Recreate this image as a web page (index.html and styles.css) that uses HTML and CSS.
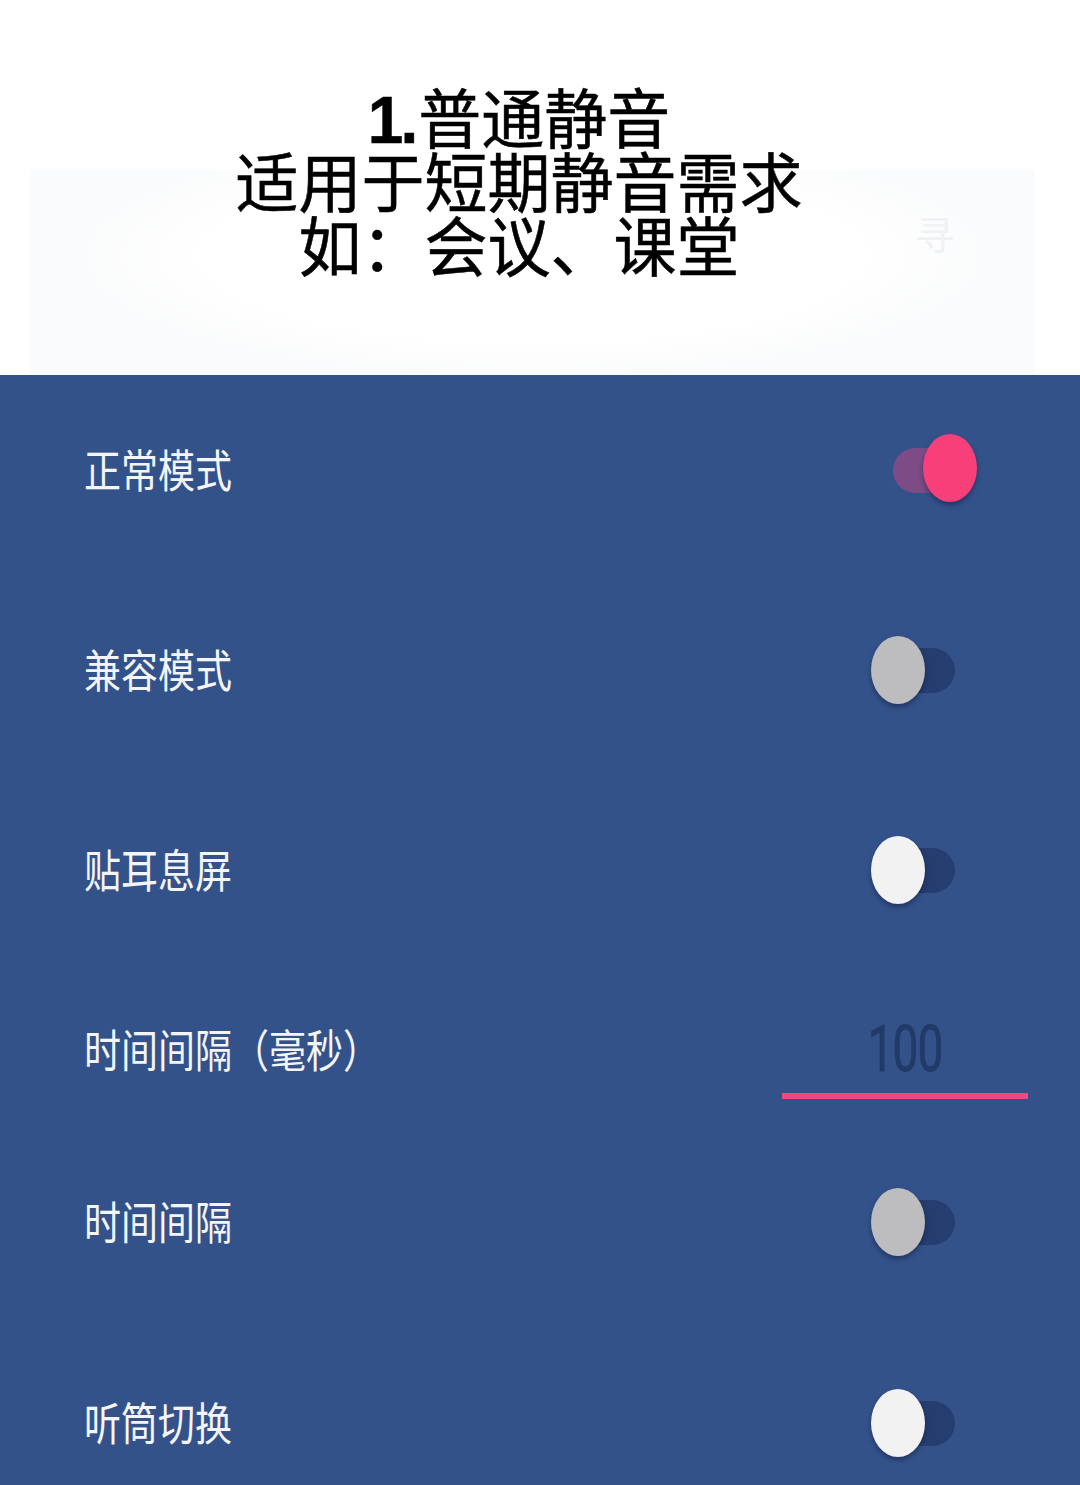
FILE: index.html
```html
<!DOCTYPE html>
<html lang="zh-CN">
<head>
<meta charset="utf-8">
<title>普通静音</title>
<link rel="stylesheet" href="styles.css">
</head>
<body>
<div class="page">
  <header class="hero">
    <div class="ghost"><span class="ghost-char">寻</span></div>
    <h1 class="title">
      <span class="line"><b class="num">1.</b>普通静音</span>
      <span class="line">适用于短期静音需求</span>
      <span class="line">如：会议、课堂</span>
    </h1>
  </header>
  <main class="settings">
    <div class="row r1">
      <span class="label">正常模式</span>
      <span class="switch on"><span class="track"></span><span class="thumb"></span></span>
    </div>
    <div class="row r2">
      <span class="label">兼容模式</span>
      <span class="switch off gray"><span class="track"></span><span class="thumb"></span></span>
    </div>
    <div class="row r3">
      <span class="label">贴耳息屏</span>
      <span class="switch off white"><span class="track"></span><span class="thumb"></span></span>
    </div>
    <div class="row r4">
      <span class="label">时间间隔（毫秒）</span>
      <span class="field"><span class="value">100</span></span>
    </div>
    <div class="row r5">
      <span class="label">时间间隔</span>
      <span class="switch off gray"><span class="track"></span><span class="thumb"></span></span>
    </div>
    <div class="row r6">
      <span class="label">听筒切换</span>
      <span class="switch off white"><span class="track"></span><span class="thumb"></span></span>
    </div>
  </main>
</div>
</body>
</html>
```
FILE: styles.css
```css
html, body {
  margin: 0;
  padding: 0;
  background: #34528a;
}
.page {
  width: 1080px;
  height: 1485px;
  overflow: hidden;
  font-family: "Noto Sans CJK SC", "Noto Sans", sans-serif;
}
.hero {
  position: relative;
  height: 375px;
  background: #ffffff;
  box-sizing: border-box;
  padding-top: 83px;
}
.ghost {
  position: absolute;
  left: 30px;
  top: 170px;
  width: 1005px;
  height: 205px;
  background:
    radial-gradient(ellipse 46% 60% at 50% 42%, #ffffff 70%, rgba(255,255,255,0) 100%),
    #fafbfc;
}
.ghost-char {
  position: absolute;
  left: 885px;
  top: 40px;
  font-size: 40px;
  line-height: 46px;
  color: #f0f1f4;
}
.title {
  position: relative;
  margin: 0;
  padding-right: 42px;
  display: flex;
  flex-direction: column;
  align-items: center;
  font-size: 63px;
  font-weight: 400;
  color: #000000;
}
.line {
  display: block;
  height: 64px;
  line-height: 64px;
  white-space: nowrap;
  transform: scaleY(1.03);
  -webkit-text-stroke: 0.5px #000;
}
.num {
  font-family: "Liberation Sans", sans-serif;
  font-weight: 900;
  font-size: 64px;
  line-height: 64px;
  letter-spacing: -3px;
  margin-right: 3px;
}
.settings {
  display: flex;
  flex-direction: column;
}
.row {
  display: flex;
  align-items: center;
  justify-content: space-between;
  padding-left: 84px;
  padding-right: 52px;
}
.r1 { height: 190px; padding-right: 103px; }
.r2 { height: 210px; padding-right: 125px; }
.r3 { height: 190px; padding-right: 125px; }
.r4 { height: 170px; padding-right: 52px; }
.r5 { height: 174px; padding-right: 125px; }
.r6 { height: 228px; padding-right: 125px; }
.label {
  display: inline-block;
  color: #f4f5f8;
  font-size: 37px;
  line-height: 46px;
  transform: scaleY(1.22);
  transform-origin: left center;
  margin-top: -4px;
}
.switch {
  position: relative;
  display: block;
  width: 84px;
  height: 68px;
}
.track {
  position: absolute;
  top: 12px;
  height: 45px;
  border-radius: 23px;
}
.thumb {
  position: absolute;
  top: 0;
  width: 54px;
  height: 68px;
  border-radius: 50%;
  box-shadow: 0 3px 5px rgba(10, 20, 50, 0.45);
}
.switch.off .track {
  left: 14px;
  width: 70px;
  background: rgba(10, 20, 55, 0.32);
}
.switch.off .thumb { left: 0; }
.switch.gray .thumb { background: #bdbdbf; }
.switch.white .thumb { background: #f2f2f2; }
.switch.on .track {
  left: 0;
  width: 62px;
  background: rgba(226, 68, 132, 0.42);
}
.switch.on .thumb {
  left: 30px;
  top: -2px;
  background: #f73f7a;
}
.field {
  display: flex;
  align-items: flex-end;
  justify-content: center;
  width: 246px;
  height: 72px;
  border-bottom: 6px solid #f2467f;
  box-sizing: border-box;
  margin-top: 26px;
}
.value {
  display: inline-block;
  font-family: "Roboto", sans-serif;
  font-size: 46px;
  line-height: 46px;
  color: #223a67;
  transform: scaleY(1.4);
  transform-origin: center bottom;
  margin-bottom: 12px;
  letter-spacing: -1px;
  -webkit-text-stroke: 0.6px #223a67;
}
```
